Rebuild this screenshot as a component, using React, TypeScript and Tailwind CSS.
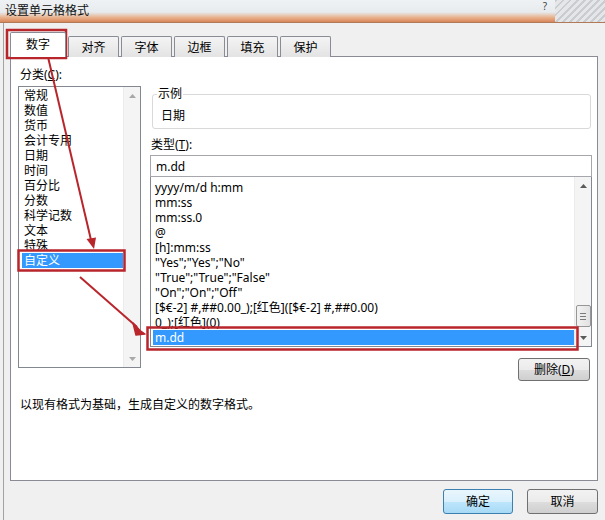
const categories = ["常规", "数值", "货币", "会计专用", "日期", "时间", "百分比", "分数", "科学记数", "文本", "特殊", "自定义"];

const formats = [
  "yyyy/m/d h:mm",
  "mm:ss",
  "mm:ss.0",
  "@",
  "[h]:mm:ss",
  "\"Yes\";\"Yes\";\"No\"",
  "\"True\";\"True\";\"False\"",
  "\"On\";\"On\";\"Off\"",
  "[$€-2] #,##0.00_);[红色]([$€-2] #,##0.00)",
  "0_);[红色](0)",
  "m.dd",
];

const tabs = ["数字", "对齐", "字体", "边框", "填充", "保护"];

function Arrow({ up, light }: { up?: boolean; light?: boolean }) {
  return (
    <svg width="7" height="4" viewBox="0 0 7 4">
      <path d={up ? "M0 4 L3.5 0 L7 4 Z" : "M0 0 L3.5 4 L7 0 Z"} fill={light ? "#a8a8a8" : "#5a5a5a"} />
    </svg>
  );
}

function ScrollBar({ thumb, light }: { thumb?: boolean; light?: boolean }) {
  return (
    <div className="w-[17px] flex flex-col bg-[#f4f4f4] border-l border-[#ececec]">
      <div className="h-[17px] flex items-center justify-center">
        <Arrow up light={light} />
      </div>
      <div className="flex-1 flex flex-col justify-end items-center pb-[2px]">
        {thumb && (
          <div className="w-[15px] h-[22px] rounded-[2px] border border-[#979797] bg-[linear-gradient(to_right,#f2f2f2,#e2e2e2)] flex flex-col items-center justify-center gap-[2px]">
            <div className="w-[6px] h-px bg-[#7a7a7a]" />
            <div className="w-[6px] h-px bg-[#7a7a7a]" />
            <div className="w-[6px] h-px bg-[#7a7a7a]" />
          </div>
        )}
      </div>
      <div className="h-[17px] flex items-center justify-center">
        <Arrow light={light} />
      </div>
    </div>
  );
}

function Annotations() {
  const red = "#b8262c";
  return (
    <svg className="absolute inset-0 pointer-events-none" width="605" height="520" viewBox="0 0 605 520">
      <rect x="7" y="30" width="59" height="28" fill="none" stroke={red} strokeWidth="2.5" />
      <rect x="18.5" y="250.5" width="106" height="20" fill="none" stroke={red} strokeWidth="2.5" />
      <rect x="147.5" y="327.5" width="430" height="22" fill="none" stroke={red} strokeWidth="2.5" />
      <line x1="48" y1="57" x2="91" y2="240" stroke={red} strokeWidth="2" />
      <path d="M86.5 239 L96 237.5 L94 249 Z" fill={red} />
      <line x1="80" y1="277" x2="137" y2="327" stroke={red} strokeWidth="2" />
      <path d="M133 323 L140 330.5 L145 334 L136 335 Z" fill={red} stroke={red} strokeWidth="1.5" strokeLinejoin="round" />
    </svg>
  );
}

export default function App() {
  return (
    <div className="relative w-[605px] h-[520px] overflow-hidden bg-[#f0f0f0] text-[12px] leading-[15px] text-black font-['Noto_Sans','Noto_Sans_CJK_SC',sans-serif] flex flex-col">
      {/* title bar */}
      <div className="h-[23px] flex items-center border-b border-[#b07a58] bg-[linear-gradient(to_bottom,#eef2f5_0%,#e7ebee_55%,#e8b08a_80%,#d9865a_100%)]">
        <span className="pl-[5px] pb-[2px] text-[#111]">设置单元格格式</span>
        <span className="ml-auto mr-[8px] mb-[10px] text-[10px] leading-[10px] text-[#444]">?</span>
        <div className="w-[50px] h-full bg-[repeating-linear-gradient(135deg,#c9ccd0_0px,#c9ccd0_2px,#e4e6e8_2px,#e4e6e8_5px)]" />
      </div>

      <div className="flex-1 ml-[3px] border-l border-[#a3a3a3] pl-[6px] pr-[7px] flex flex-col">
        {/* tabs */}
        <div className="relative z-10 mt-[9px] h-[25px] flex items-end">
          {tabs.map((t, i) =>
            i === 0 ? (
              <div key={t} className="w-[56px] h-[25px] bg-white border border-b-0 border-[#898c95] rounded-t-[2px] flex items-center justify-center pb-[2px]">
                {t}
              </div>
            ) : (
              <div key={t} className="ml-[2px] w-[51px] h-[21px] border border-b-0 border-[#898c95] rounded-t-[2px] bg-[linear-gradient(to_bottom,#f4f4f4,#e3e3e3)] flex items-center justify-center">
                {t}
              </div>
            )
          )}
        </div>

        {/* panel */}
        <div className="h-[425px] -mt-[1px] border border-[#898c95] bg-white flex flex-col pt-[10px] pl-[7px] pr-[5px]">
          <div className="flex">
            <div className="w-[123px] flex flex-col">
              <div className="h-[15px] pl-[2px]">
                分类(<span className="underline">C</span>):
              </div>
              <div className="mt-[4px] h-[282px] border border-[#828790] flex">
                <div className="flex-1 pt-[1px]">
                  {categories.map((c, i) =>
                    i === categories.length - 1 ? (
                      <div key={c} className="h-[15px] ml-[3px] pl-[2px] bg-[#3399ff] text-white">
                        {c}
                      </div>
                    ) : (
                      <div key={c} className="h-[15px] pl-[5px]">
                        {c}
                      </div>
                    )
                  )}
                </div>
                <ScrollBar light />
              </div>
            </div>

            <div className="ml-[9px] flex-1 flex flex-col pt-[20px]">
              <fieldset className="ml-[2px] mr-[1px] h-[42px] border border-[#d9d9d9] rounded-[3px]">
                <legend className="ml-[4px] px-[1px] leading-[14px]">示例</legend>
                <div className="pl-[8px] mt-[7px]">日期</div>
              </fieldset>
              <div className="mt-[8px] pl-[1px] h-[15px]">
                类型(<span className="underline">T</span>):
              </div>
              <div className="mt-[3px] h-[22px] border border-[#a5a7ad] pl-[5px] flex items-center">m.dd</div>
              <div className="h-[170px] border border-t-0 border-[#828790] flex overflow-hidden">
                <div className="flex-1 pt-[3px] whitespace-nowrap overflow-hidden">
                  {formats.map((f, i) =>
                    i === formats.length - 1 ? (
                      <div key={f} className="h-[15px] ml-[2px] pl-[2px] bg-[#3399ff] text-white">
                        {f}
                      </div>
                    ) : (
                      <div key={f} className="h-[15px] pl-[4px]">
                        {f}
                      </div>
                    )
                  )}
                </div>
                <ScrollBar thumb />
              </div>
              <div className="self-end mt-[11px] mr-[2px] w-[72px] h-[23px] border border-[#707070] rounded-[3px] bg-[linear-gradient(to_bottom,#f2f2f2_0%,#ebebeb_50%,#dddddd_51%,#cfcfcf_100%)] flex items-center justify-center">
                删除(<span className="underline">D</span>)
              </div>
            </div>
          </div>

          <div className="mt-[16px] pl-[2px]">以现有格式为基础，生成自定义的数字格式。</div>
        </div>

        {/* footer */}
        <div className="mt-[8px] flex justify-end gap-[14px]">
          <div className="w-[70px] h-[25px] border border-[#3c7fb1] rounded-[3px] bg-[linear-gradient(to_bottom,#eaf6fd_0%,#d9f0fc_50%,#bee6fd_51%,#a7d9f5_100%)] flex items-center justify-center">
            确定
          </div>
          <div className="w-[71px] h-[25px] border border-[#707070] rounded-[3px] bg-[linear-gradient(to_bottom,#f2f2f2_0%,#ebebeb_50%,#dddddd_51%,#cfcfcf_100%)] flex items-center justify-center">
            取消
          </div>
        </div>
      </div>

      <Annotations />
    </div>
  );
}
